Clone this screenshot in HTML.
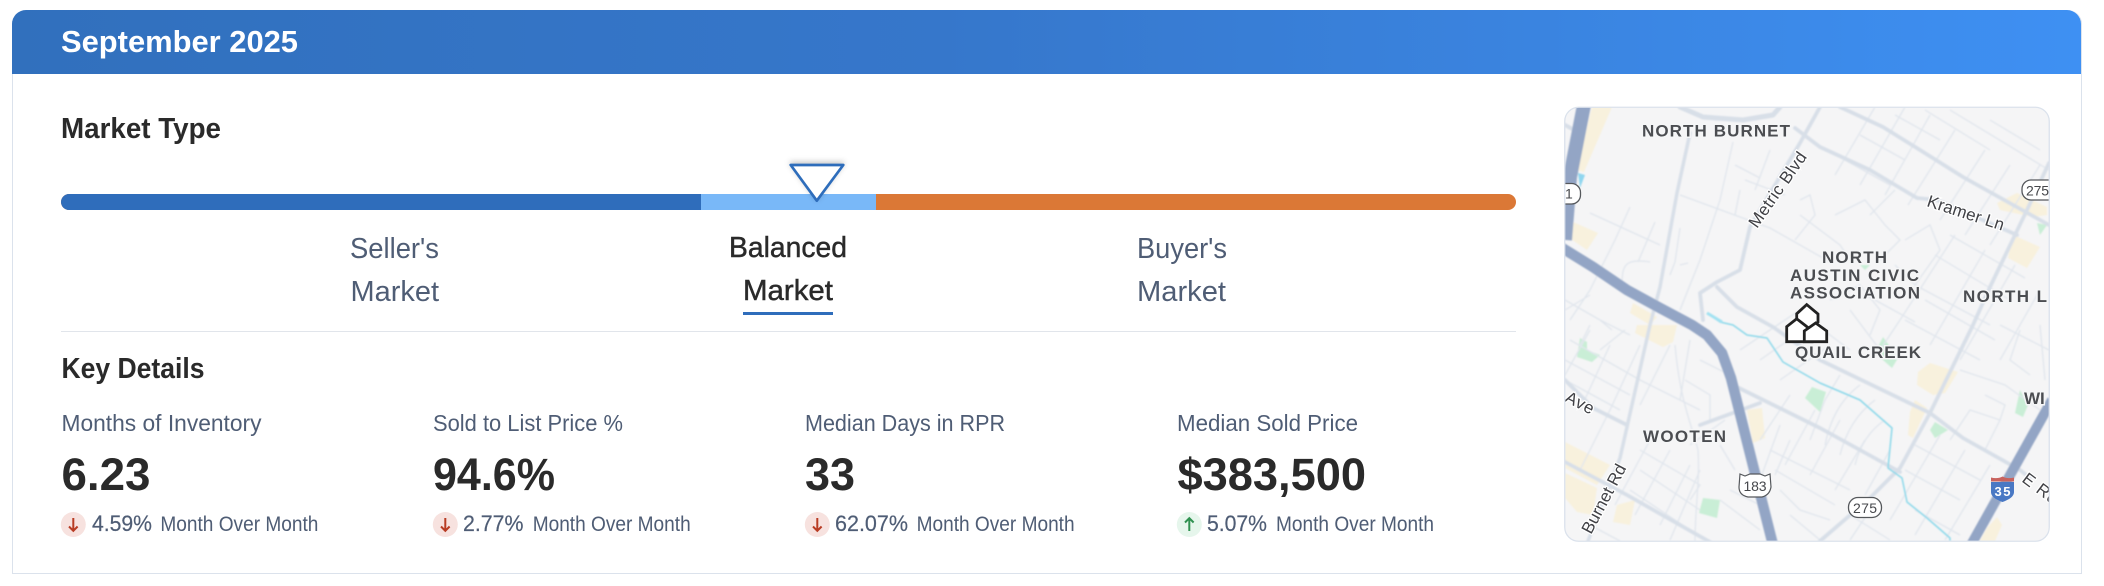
<!DOCTYPE html>
<html lang="en"><head><meta charset="utf-8"><title>September 2025 Market Type</title>
<style>
html,body{margin:0;padding:0;background:#fff;width:2104px;height:586px;overflow:hidden}
.abs{position:absolute}
#card{left:12px;top:10px;width:2067.5px;height:563px;border:1.5px solid #dbe2ec;border-top:none;border-radius:14px 14px 0 0;box-sizing:content-box}
#head{left:12px;top:10px;width:2069px;height:64px;border-radius:14px 14px 0 0;background:linear-gradient(90deg,#3170bd 0%,#3677cb 45%,#3e90f3 100%)}
#bar{left:61px;top:194px;width:1455px;height:16px;border-radius:8px;overflow:hidden;background:#db7836}
#bar i{position:absolute;top:0;height:16px}
#sep{left:61px;top:330.500px;width:1455px;height:1.500px;background:#e1e5eb}
#ul{left:743px;top:312px;width:90px;height:3px;background:#2f6dbb}
svg{position:absolute;left:0;top:0}
text{font-family:"Liberation Sans",sans-serif}
.t{font-size:29px;fill:#4f5d75}
.d{font-size:29px;fill:#2a2a2a;stroke:#2a2a2a;stroke-width:.45px}
.h{font-size:29px;font-weight:700;fill:#2a2a2a}
.l{font-size:23px;fill:#4f5d75}
.v{font-size:45px;font-weight:700;fill:#2a2a2a}
.p{font-size:22.500px;fill:#4f5d75;stroke:#4f5d75;stroke-width:.2px}
.m{font-size:21px;fill:#4f5d75}
.ml{font-size:17px;font-weight:700;fill:#4b4d51;stroke:#f5f6f7;stroke-width:3px;paint-order:stroke;letter-spacing:0}
.rl{font-size:17px;fill:#3f4145;stroke:#fff;stroke-width:2.500px;paint-order:stroke}
.sh{font-size:14px;fill:#45474b}
</style></head><body>
<div class="abs" id="card"></div>
<div class="abs" id="head"></div>
<div class="abs" id="bar"><i style="left:0;width:640px;background:#2f6dbb"></i><i style="left:640px;width:175px;background:#79b8f8"></i></div>
<div class="abs" id="sep"></div>
<div class="abs" id="ul"></div>
<svg width="2104" height="586" viewBox="0 0 2104 586" xmlns="http://www.w3.org/2000/svg">
<defs>
<clipPath id="mc"><rect x="1565" y="107" width="484" height="434" rx="14"/></clipPath>
<filter id="b1" x="0" y="0" width="1" height="1"><feGaussianBlur stdDeviation="0.7"/></filter>
<filter id="b2" x="-.05" y="-.05" width="1.1" height="1.1"><feGaussianBlur stdDeviation="0.35"/></filter>
<filter id="ts" x="-.3" y="-.4" width="1.6" height="1.6"><feDropShadow dx="0" dy="-2" stdDeviation="3" flood-color="#000" flood-opacity=".22"/></filter>
</defs>

<text x="61" y="52" font-size="31" font-weight="700" fill="#fff" textLength="237" lengthAdjust="spacingAndGlyphs">September 2025</text>
<text class="h" x="61" y="138" textLength="160" lengthAdjust="spacingAndGlyphs">Market Type</text>

<path d="M790.700 165H843.300L816.800 200.700Z" fill="#fff" stroke="#2f6dbb" stroke-width="2.700" stroke-linejoin="round" filter="url(#ts)"/>

<text class="t" x="350" y="258" textLength="89" lengthAdjust="spacingAndGlyphs">Seller's</text>
<text class="t" x="350.500" y="301" textLength="88.500" lengthAdjust="spacingAndGlyphs">Market</text>
<text class="d" x="729" y="257" textLength="118" lengthAdjust="spacingAndGlyphs">Balanced</text>
<text class="d" x="743" y="300" textLength="90" lengthAdjust="spacingAndGlyphs">Market</text>
<text class="t" x="1137" y="258" textLength="90" lengthAdjust="spacingAndGlyphs">Buyer's</text>
<text class="t" x="1137" y="301" textLength="89" lengthAdjust="spacingAndGlyphs">Market</text>

<text class="h" x="61.500" y="378" textLength="143" lengthAdjust="spacingAndGlyphs">Key Details</text>

<text class="l" x="61.500" y="431" textLength="200" lengthAdjust="spacingAndGlyphs">Months of Inventory</text>
<text class="l" x="433" y="431" textLength="190" lengthAdjust="spacingAndGlyphs">Sold to List Price %</text>
<text class="l" x="805" y="431" textLength="200" lengthAdjust="spacingAndGlyphs">Median Days in RPR</text>
<text class="l" x="1177" y="431" textLength="181" lengthAdjust="spacingAndGlyphs">Median Sold Price</text>

<text class="v" x="61.500" y="490" textLength="89" lengthAdjust="spacingAndGlyphs">6.23</text>
<text class="v" x="433" y="490" textLength="122" lengthAdjust="spacingAndGlyphs">94.6%</text>
<text class="v" x="805" y="490" textLength="50" lengthAdjust="spacingAndGlyphs">33</text>
<text class="v" x="1177.500" y="490" textLength="188.500" lengthAdjust="spacingAndGlyphs">$383,500</text>

<circle cx="73.300" cy="524.500" r="12.500" fill="#f7e2df"/>
<path d="M73.300 518V530.500M69 526.500L73.300 530.800L77.600 526.500" fill="none" stroke="#b83c24" stroke-width="2"/>
<text class="p" x="92" y="531" textLength="60" lengthAdjust="spacingAndGlyphs">4.59%</text>
<text class="m" x="160.400" y="531" textLength="158" lengthAdjust="spacingAndGlyphs">Month Over Month</text>

<circle cx="445.300" cy="524.500" r="12.500" fill="#f7e2df"/>
<path d="M445.300 518V530.500M441 526.500L445.300 530.800L449.600 526.500" fill="none" stroke="#b83c24" stroke-width="2"/>
<text class="p" x="463" y="531" textLength="60.500" lengthAdjust="spacingAndGlyphs">2.77%</text>
<text class="m" x="532.700" y="531" textLength="158" lengthAdjust="spacingAndGlyphs">Month Over Month</text>

<circle cx="817.300" cy="524.500" r="12.500" fill="#f7e2df"/>
<path d="M817.300 518V530.500M813 526.500L817.300 530.800L821.600 526.500" fill="none" stroke="#b83c24" stroke-width="2"/>
<text class="p" x="835" y="531" textLength="73" lengthAdjust="spacingAndGlyphs">62.07%</text>
<text class="m" x="916.600" y="531" textLength="158" lengthAdjust="spacingAndGlyphs">Month Over Month</text>

<circle cx="1189.300" cy="524.500" r="12.500" fill="#e6f6ec"/>
<path d="M1189.300 531V518.500M1185 522.500L1189.300 518.200L1193.600 522.500" fill="none" stroke="#2f9150" stroke-width="2"/>
<text class="p" x="1207" y="531" textLength="60" lengthAdjust="spacingAndGlyphs">5.07%</text>
<text class="m" x="1276" y="531" textLength="158" lengthAdjust="spacingAndGlyphs">Month Over Month</text>

<!-- MAP -->
<g clip-path="url(#mc)">
<rect x="1565" y="107" width="484" height="434" fill="#f5f5f6"/>
<g filter="url(#b1)">
<!-- tan -->
<g fill="#f8f1dd">
<polygon points="1592,107 1612,107 1584,172 1577,170"/>
<polygon points="1573,222 1598,233 1587,250 1568,237"/>
<polygon points="1633,303 1657,317 1650,325 1630,313"/>
<polygon points="1637,325 1677,325 1673,342 1663,347 1635,333"/>
<polygon points="1747,410 1762,408 1765,438 1753,443"/>
<polygon points="1565,442 1610,465 1597,485 1565,468"/>
<polygon points="1565,473 1597,488 1593,515 1577,512 1565,498"/>
<polygon points="1617,505 1635,500 1630,525 1613,522"/>
<polygon points="1997,203 2017,193 2047,207 2047,215 2033,217 2000,210"/>
<polygon points="2013,235 2040,247 2027,268 2008,258"/>
<polygon points="1930,363 1958,372 1945,393 1933,395 1917,385 1918,372"/>
<polygon points="1915,400 1927,408 1913,438 1908,435 1910,412"/>
<polygon points="1987,528 1997,517 2002,525 1995,541 1980,541"/>
</g>
<!-- green -->
<g fill="#c9eed6">
<polygon points="1580,338 1587,342 1587,350 1600,355 1592,362 1577,357"/>
<polygon points="1812,387 1826,392 1820,412 1805,398"/>
<polygon points="1703,498 1720,500 1717,518 1699,513"/>
<polygon points="1883,337 1898,358 1892,368 1875,353"/>
<polygon points="1935,422 1948,430 1935,438 1930,430"/>
<polygon points="2020,390 2028,405 2023,417 2015,413"/>
<polygon points="2037,223 2047,225 2040,235"/>
<polygon points="1860,265 1870,265 1865,270"/>
</g>
<polygon points="1578,173 1585,175 1580,188" fill="#8fd6ef"/>
<!-- thin streets -->
<g fill="none" stroke="#e1e6ed" stroke-width="1.300">
<path d="M1590 213L1660 245M1630 207L1615 240L1590 290M1655 222L1638 262M1650 262C1625 258 1622 265 1622 285M1680 228L1675 262L1670 275M1688 263L1680 265"/>
<path d="M1680 195L1770 228L1830 262M1770 150L1755 190M1745 180L1785 195M1735 165L1760 178M1740 190L1735 215"/>
<path d="M1733 142L1720 200L1700 260L1680 310M1800 200L1810 195L1815 215L1795 240"/>
<path d="M1570 320L1590 290M1590 325L1580 345M1565 310L1590 295M1600 320L1612 330M1625 330L1600 350"/>
<path d="M1835 175L1875 107M1860 185L1905 107M1885 195L1930 115M1908 205L1955 130M1940 220L1985 150M1965 235L2010 165M1990 245L2040 165"/>
<path d="M1860 135L1905 160M1845 160L1890 185M1895 115L1940 140M1925 110L1990 150M1950 110L2049 170M1990 120L2040 150"/>
<path d="M1835 215L1865 200L1885 225L1900 240L1880 260M1870 215L1895 190M1905 240L1930 225L1940 250L1915 285L1895 265M1800 215L1840 245L1850 260"/>
<path d="M1915 285L1990 325M1935 255L2010 300M1950 235L2025 278M1925 300L1995 340M1905 320L1980 360M1955 235L1900 320M1985 250L1930 345M2015 265L1960 360M2040 290L2000 360"/>
<path d="M1830 300L1860 285L1880 310L1870 335M1850 310L1880 350M1810 320L1850 350M1900 320L1880 350M1875 300L1915 322"/>
<path d="M1960 370L2005 385L2040 410M2000 325L2049 350M2020 330L2010 360L2030 375M1985 395L2005 405L2000 420M1950 440L1970 410L2000 420L1985 450L2005 460M2040 325L2045 380"/>
<path d="M1915 445L1980 480M1905 470L1960 500M1940 435L1890 520M1965 450L1915 535M1990 465L1945 540M1915 510L1960 535"/>
<path d="M1740 350L1800 310M1760 360L1810 325M1780 380L1830 345M1790 395L1760 440M1815 410L1785 465M1840 420L1810 475M1865 440L1835 490M1890 450L1865 495"/>
<path d="M1840 375L1825 400L1810 440M1860 385C1840 400 1830 420 1825 445M1875 400C1855 415 1845 435 1840 455M1885 420C1870 430 1860 445 1855 465"/>
<path d="M1770 450L1850 490M1775 470L1835 505M1780 490L1800 510L1830 520M1790 515L1820 540M1850 515L1890 540M1870 510L1850 540"/>
<path d="M1570 340L1640 380L1700 410M1565 360L1630 395M1565 380L1620 410M1590 330L1565 375M1610 345L1580 410M1640 345L1610 410L1580 470M1670 345L1640 405M1690 340L1680 400"/>
<path d="M1640 450L1700 485L1690 500M1640 470L1700 510M1630 490L1690 530M1650 440L1615 505M1670 450L1635 515M1690 465L1660 525M1700 470L1670 540M1590 525L1620 541"/>
<path d="M1675 345C1680 400 1690 420 1698 450C1700 480 1695 510 1695 541M1685 380L1710 395L1710 420M1700 360L1730 375M1690 445L1725 420M1720 445L1735 470"/>
<path d="M1720 500L1760 530M1730 490L1760 505M1780 425L1760 480M1790 440L1775 475"/>
<path d="M1565 300L1600 320L1630 335"/>
</g>
<!-- light roads -->
<g fill="none" stroke="#d8dfe8" stroke-width="3.800" stroke-linejoin="round" stroke-linecap="round">
<path d="M1840 107L1883 127L1920 150L1963 177L2049 225"/>
<path d="M1795 128L1820 147L1870 170L1917 198L1937 200L2017 235"/>
<path d="M1820 107L1800 143L1750 227L1740 270L1717 282L1700 293L1703 320"/>
<path d="M1680 107L1703 117L1743 120L1773 115L1780 107" stroke-width="5"/>
<path d="M1690 133L1677 193L1660 287L1650 325L1620 458L1588 541" stroke-width="3.500"/>
<path d="M2049 163L2027 210L1990 287L1973 325L1930 413L1900 468L1870 498L1820 541"/>
<path d="M1717 287L1737 307L1773 327L1820 360L1930 413L1963 438L2020 470L2030 478"/>
<path d="M1737 387L1820 428L1900 472"/>
<path d="M1565 380L1593 408L1627 425M1700 425L1760 403"/>
<path d="M1565 462L1627 495L1710 542"/>
<path d="M1565 125L1578 132" stroke-width="4"/>
</g>
<!-- water -->
<g fill="none" stroke="#8ad8ea" stroke-width="1.500" stroke-linejoin="round">
<path d="M1707 313L1720 322L1733 325L1747 335L1767 338L1783 362L1820 383L1860 400L1892 428L1888 468L1902 478L1907 502L1927 518L1950 538L1950 541"/>
<path d="M1707 313L1722 322" stroke-width="3" stroke="#a2e2f2"/>
</g>
<!-- highways -->
<g fill="none" stroke-linejoin="round" stroke-linecap="butt">
<path d="M1585 100L1570 177L1565 240" stroke="#93a5c5" stroke-width="14"/>
<path d="M1559 246L1593 267L1627 290L1660 308L1692 325L1707 335L1722 353L1731 378L1773 545" stroke="#93a5c5" stroke-width="10.500"/>
<path d="M2052 400L1971 545" stroke="#93a5c5" stroke-width="10"/>
</g>
</g>
<!-- labels -->
<g filter="url(#b2)">
<text class="ml" x="1642" y="136.500" textLength="148" lengthAdjust="spacing">NORTH BURNET</text>
<text class="ml" x="1822" y="263" textLength="65" lengthAdjust="spacing">NORTH</text>
<text class="ml" x="1790" y="281" textLength="129" lengthAdjust="spacing">AUSTIN CIVIC</text>
<text class="ml" x="1790" y="298.500" textLength="130" lengthAdjust="spacing">ASSOCIATION</text>
<text class="ml" x="1963" y="302" textLength="84" lengthAdjust="spacing">NORTH L</text>
<text class="ml" x="1795" y="358" textLength="126" lengthAdjust="spacing">QUAIL CREEK</text>
<text class="ml" x="2024" y="404">WI</text>
<text class="ml" x="1643" y="442" textLength="83" lengthAdjust="spacing">WOOTEN</text>
<text class="rl" transform="translate(1757 229) rotate(-55)" textLength="88" lengthAdjust="spacing">Metric Blvd</text>
<text class="rl" transform="translate(1926 206) rotate(18)" textLength="80" lengthAdjust="spacing">Kramer Ln</text>
<text class="rl" transform="translate(1564 401) rotate(27)" textLength="30" lengthAdjust="spacing">Ave</text>
<text class="rl" transform="translate(1591 535) rotate(-62)" textLength="76" lengthAdjust="spacing">Burnet Rd</text>
<text class="rl" transform="translate(2021 481) rotate(37)" textLength="40" lengthAdjust="spacing">E Rd</text>
<!-- shields -->
<rect x="1550" y="183.500" width="30.500" height="20.500" rx="9" fill="#fff" stroke="#55585c" stroke-width="1.300"/>
<text class="sh" x="1565" y="198.500">1</text>
<rect x="2022" y="180" width="40" height="20" rx="9" fill="#fff" stroke="#55585c" stroke-width="1.300"/>
<text class="sh" x="2026" y="195.500" textLength="23" lengthAdjust="spacing">275</text>
<path d="M1740 474L1745 476L1750 474H1760L1765 476L1770 474L1771 487C1770 493 1766 496 1762 497H1748C1743 496 1739 493 1739 487Z" fill="#fff" stroke="#55585c" stroke-width="1.200"/>
<text class="sh" x="1743.500" y="491" textLength="23" lengthAdjust="spacing">183</text>
<rect x="1848.500" y="497.500" width="33" height="20" rx="9.500" fill="#fff" stroke="#55585c" stroke-width="1.300"/>
<text class="sh" x="1853" y="513" textLength="24" lengthAdjust="spacing">275</text>
<path d="M1991 482H2014V492C2014 497 2008 500 2002.500 502C1997 500 1991 497 1991 492Z" fill="#4a78c4"/>
<path d="M1991 477.500C1995 478.500 1999 478.500 2002.500 476.500C2006 478.500 2010 478.500 2014 477.500V481.500H1991Z" fill="#c8645f"/>
<text x="1994.500" y="496" font-size="13" font-weight="700" fill="#fff" textLength="16" lengthAdjust="spacing">35</text>
</g>
<!-- marker -->
<g fill="#fff" stroke="#222" stroke-width="2.800" stroke-linejoin="miter">
<path d="M1796.700 322V313.800L1806.700 304.600L1818 314V322L1806 331Z"/>
<path d="M1804.500 341.700H1786.700V326.700L1796.700 318.800L1806 326L1812 331V341.700Z"/>
<path d="M1804.300 341.700V331L1815.700 323L1826.700 331V341.700Z"/>
</g>
</g>
<rect x="1564.750" y="107.250" width="484.500" height="434" rx="14" fill="none" stroke="#dbe2ec" stroke-width="1.300"/>
</svg>
</body></html>
